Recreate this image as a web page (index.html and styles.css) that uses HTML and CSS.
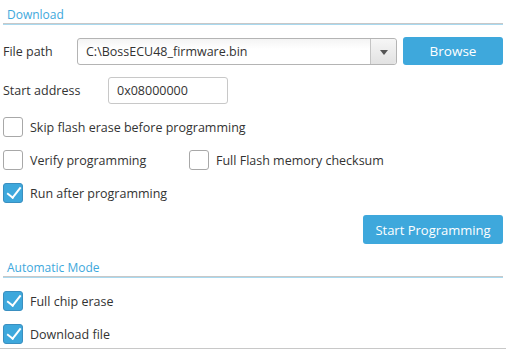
FILE: index.html
```html
<!DOCTYPE html>
<html lang="en">

<head>
    <meta charset="UTF-8">
    <meta name="viewport" content="width=device-width, initial-scale=1.0">
    <title>Download</title>
    <link rel="stylesheet" href="styles.css">
</head>

<body>
    <div class="panel">
        <div class="section-title">Download</div>

        <div class="row file-row">
            <span class="label">File path</span>
            <div class="combo">
                <span class="combo-value">C:\BossECU48_firmware.bin</span>
                <span class="combo-arrow"></span>
            </div>
            <button class="btn browse">Browse</button>
        </div>

        <div class="row address-row">
            <span class="label">Start address</span>
            <div class="text-input">0x08000000</div>
        </div>

        <div class="checks">
            <label class="check"><span class="box"></span>Skip flash erase before programming</label>
            <div class="check-pair">
                <label class="check verify"><span class="box"></span>Verify programming</label>
                <label class="check"><span class="box"></span>Full Flash memory checksum</label>
            </div>
            <label class="check"><span class="box checked"></span>Run after programming</label>
        </div>

        <div class="actions">
            <button class="btn start">Start Programming</button>
        </div>

        <div class="section-title auto">Automatic Mode</div>

        <div class="checks auto-checks">
            <label class="check"><span class="box checked"></span>Full chip erase</label>
            <label class="check"><span class="box checked"></span>Download file</label>
        </div>
    </div>
</body>

</html>
```

FILE: styles.css
```css
body {
    font-family: 'Open Sans', 'Noto Sans', sans-serif;
    font-size: 12.5px;
    color: #333;
    margin: 0;
    padding: 0;
    background: #fff;
}

.panel {
    padding: 0 3px;
    height: 348px;
    border-bottom: 1px solid #c8c8c8;
    overflow: hidden;
}

.section-title {
    color: #3ea8dc;
    font-size: 12px;
    line-height: 16px;
    padding: 7px 0 0 4px;
    height: 16px;
    border-bottom: 1px solid #c8c8c8;
    box-shadow: 0 1px 0 #a9d9ef;
}

.row {
    display: flex;
    align-items: center;
}

.file-row {
    margin-top: 13px;
    height: 28px;
}

.label {
    width: 74px;
    flex-shrink: 0;
}

.combo {
    width: 318px;
    height: 25px;
    border: 1px solid #b4b4b4;
    border-radius: 3px;
    display: flex;
    align-items: stretch;
    background: linear-gradient(#f4f4f4, #fff 40%);
}

.combo-value {
    flex: 1;
    padding-left: 8px;
    line-height: 25px;
}

.combo-arrow {
    width: 25px;
    border-left: 1px solid #c4c4c4;
    border-radius: 0 3px 3px 0;
    background: linear-gradient(#f6f6f6, #e2e2e2);
    position: relative;
}

.combo-arrow::after {
    content: '';
    position: absolute;
    left: 9px;
    top: 11px;
    border-left: 4px solid transparent;
    border-right: 4px solid transparent;
    border-top: 5px solid #555;
}

.btn {
    font-family: inherit;
    font-size: 13px;
    color: #fff;
    background: #3ea8dc;
    border: none;
    border-radius: 3px;
    padding: 0;
}

.browse {
    width: 100px;
    height: 28px;
    margin-left: 6px;
    font-size: 13.5px;
}

.address-row {
    margin-top: 12px;
    height: 27px;
}

.address-row .label {
    width: 105px;
}

.text-input {
    width: 110px;
    height: 25px;
    line-height: 25px;
    padding-left: 8px;
    border: 1px solid #c8c8c8;
    border-radius: 3px;
}

.checks {
    display: flex;
    flex-direction: column;
    gap: 13px;
    margin-top: 13px;
}

.check-pair {
    display: flex;
}

.check {
    display: flex;
    align-items: center;
    gap: 7px;
    height: 20px;
}

.verify {
    width: 186px;
}

.box {
    width: 18px;
    height: 18px;
    border: 1px solid #a8a8a8;
    border-radius: 3px;
    background: #fff;
    position: relative;
    flex-shrink: 0;
}

.box.checked {
    background: #3ea8dc;
    border-color: #3a8fc0;
}

.box.checked::after {
    content: '';
    position: absolute;
    left: 6px;
    top: 0;
    width: 6px;
    height: 12px;
    border-right: 2px solid #fff;
    border-bottom: 2px solid #fff;
    transform: rotate(38deg);
}

.actions {
    display: flex;
    justify-content: flex-end;
    margin-top: 12px;
}

.start {
    width: 140px;
    height: 29px;
}

.section-title.auto {
    padding-top: 16px;
}

.auto-checks {
    margin-top: 14px;
}
```
